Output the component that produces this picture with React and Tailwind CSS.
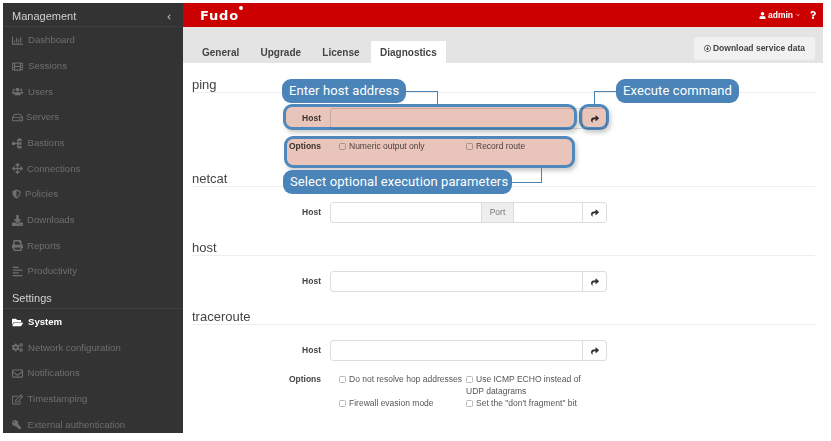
import React from "react";
import {
  FaRegChartBar, FaFilm, FaUsers, FaRegHdd, FaArrowsAlt, FaShieldAlt, FaDownload, FaPrint,
  FaAlignLeft, FaFolderOpen, FaCogs, FaRegEnvelope, FaRegEdit, FaKey, FaUser, FaShare, FaChevronLeft,
  FaChevronDown, FaQuestion, FaRegArrowAltCircleDown,
} from "react-icons/fa";

// dot plus bracket, the bastion mark has no match in the icon sets
function BastionIcon({ className }) {
  return (
    <svg viewBox="0 0 11 11" fill="currentColor" className={className}>
      <rect x="0" y="4" width="3" height="3" />
      <rect x="3" y="5" width="2" height="1" />
      <rect x="5" y="1.5" width="1" height="8" />
      <rect x="6" y="0.5" width="3.5" height="2.6" />
      <rect x="6" y="4.2" width="3.5" height="2.6" />
      <rect x="6" y="7.9" width="3.5" height="2.6" />
    </svg>
  );
}

const management = [
  { label: "Dashboard", icon: FaRegChartBar, box: "w-[16px]" },
  { label: "Sessions", icon: FaFilm, box: "w-[16px]" },
  { label: "Users", icon: FaUsers, box: "w-[16px]" },
  { label: "Servers", icon: FaRegHdd, box: "w-[14px]" },
  { label: "Bastions", icon: BastionIcon, box: "w-[15.5px]" },
  { label: "Connections", icon: FaArrowsAlt, box: "w-[15px]" },
  { label: "Policies", icon: FaShieldAlt, box: "w-[13px]", size: "w-[9px] h-[10px]" },
  { label: "Downloads", icon: FaDownload, box: "w-[15px]" },
  { label: "Reports", icon: FaPrint, box: "w-[15px]" },
  { label: "Productivity", icon: FaAlignLeft, box: "w-[15.5px]" },
];

const settings = [
  { label: "System", icon: FaFolderOpen, box: "w-[16px]", active: true },
  { label: "Network configuration", icon: FaCogs, box: "w-[16px]" },
  { label: "Notifications", icon: FaRegEnvelope, box: "w-[15.5px]" },
  { label: "Timestamping", icon: FaRegEdit, box: "w-[15.5px]" },
  { label: "External authentication", icon: FaKey, box: "w-[15.5px]", size: "w-[9px] h-[9px] -scale-x-100" },
];

function NavItem({ item }) {
  const Icon = item.icon;
  return (
    <div className={`flex items-center h-[25.7px] pl-[9px] text-[9.6px] ${item.active ? "text-white font-bold" : "text-[#6f6f6f]"}`}>
      <span className={`${item.box} shrink-0`}>
        <Icon className={item.size || "w-[11px] h-[11px]"} />
      </span>
      <span>{item.label}</span>
    </div>
  );
}

function Sidebar() {
  return (
    <aside className="w-[180px] shrink-0 bg-[#333333] flex flex-col">
      <div className="flex items-center justify-between h-[24px] pt-[4px] pl-[9px] pr-[11px] border-b border-[#3f3f3f] text-[11px] text-[#d2d2d2] shrink-0">
        <span>Management</span>
        <FaChevronLeft className="w-[6px] h-[6px] text-[#bbbbbb]" />
      </div>
      <div className="pt-[0.5px]">
        {management.map((item) => <NavItem key={item.label} item={item} />)}
      </div>
      <div className="flex items-end h-[25px] pb-[3px] pl-[9px] border-b border-[#3f3f3f] text-[11px] leading-[14px] text-[#d2d2d2] shrink-0">
        Settings
      </div>
      <div>
        {settings.map((item) => <NavItem key={item.label} item={item} />)}
      </div>
    </aside>
  );
}

function TopBar() {
  return (
    <header className="h-[24px] shrink-0 bg-[#cc0000] flex items-center justify-between pl-[17px] pr-[6px] text-white">
      <div className="flex items-start">
        <span className="text-[13px] leading-none tracking-[0.8px] font-bold font-['DejaVu_Sans',sans-serif]">Fudo</span>
        <span className="w-[4px] h-[4px] mt-[-3px] ml-[0.5px] rounded-full bg-white" />
      </div>
      <div className="flex items-center text-[8.5px] font-semibold">
        <FaUser className="w-[7px] h-[7px] mr-[2px]" />
        <span>admin</span>
        <FaChevronDown className="w-[4px] h-[4px] ml-[3px] mr-[9px] text-[#f0b0b0]" />
        <FaQuestion className="w-[8px] h-[8px]" />
      </div>
    </header>
  );
}

function Tabs() {
  const tabs = ["General", "Upgrade", "License", "Diagnostics"];
  return (
    <div className="h-[36px] shrink-0 bg-[#e4e4e4] flex items-end justify-between pl-[9px] pr-[8px]">
      <div className="flex gap-[1.25px] text-[10px] font-bold text-[#444444]">
        {tabs.map((tab) => (
          <div
            key={tab}
            className={`h-[22px] flex items-center ${tab === "Diagnostics" ? "bg-white px-[9.25px]" : "px-[10px]"}`}
          >
            {tab}
          </div>
        ))}
      </div>
      <button className="h-[23px] w-[121px] mb-[3px] rounded-[3px] bg-[#f1f1f1] flex items-center justify-center gap-[2px] text-[8.5px] font-bold text-[#444444]">
        <FaRegArrowAltCircleDown className="w-[7px] h-[7px]" />
        Download service data
      </button>
    </div>
  );
}

function Section({ title, children }) {
  return (
    <section className="mb-[10.5px]">
      <h2 className="h-[22.5px] flex items-end pb-[0.5px] text-[13px] leading-[15px] text-[#444444] border-b border-[#eeeeee]">{title}</h2>
      <div className="pt-[15px]">{children}</div>
    </section>
  );
}

function ExecButton() {
  return (
    <button className="w-[25px] h-[21px] shrink-0 -ml-px border border-[#dddddd] rounded-r-[3px] bg-white flex items-center justify-center">
      <FaShare className="w-[8px] h-[8px] text-[#333333]" />
    </button>
  );
}

function HostRow({ port }) {
  return (
    <div className="flex items-center">
      <label className="w-[129px] text-right text-[8.5px] font-bold text-[#444444]">Host</label>
      <div className="ml-[9px] flex">
        {port ? (
          <div className="w-[253px] h-[21px] flex border border-[#dddddd] rounded-l-[3px]">
            <div className="w-[150px]" />
            <div className="w-[33px] bg-[#eeeeee] border-x border-[#dddddd] flex items-center justify-center text-[8.5px] text-[#777777]">Port</div>
          </div>
        ) : (
          <div className="w-[253px] h-[21px] border border-[#dddddd] rounded-l-[3px]" />
        )}
        <ExecButton />
      </div>
    </div>
  );
}

function Check({ label }) {
  return (
    <div className="text-[8.5px] leading-[12px] text-[#555555]">
      <span className="inline-block w-[7px] h-[7px] mr-[3px] align-[-1px] border border-[#bbbbbb] rounded-[1.5px]" />
      {label}
    </div>
  );
}

function OptionsRow({ className, children }) {
  return (
    <div className={`flex ${className}`}>
      <label className="w-[129px] text-right text-[8.5px] leading-[12px] font-bold text-[#444444]">Options</label>
      <div className="ml-[18px] w-[245px] grid grid-cols-[127px_118px]">{children}</div>
    </div>
  );
}

function Callout({ className, children }) {
  return (
    <div className={`absolute h-[24px] rounded-[9px] bg-[#4a84b8] text-white text-[13px] tracking-[0.1px] leading-[24px] px-[7px] whitespace-nowrap font-['Roboto',sans-serif] ${className}`}>
      {children}
    </div>
  );
}

function Highlight({ className }) {
  return (
    <div className={`absolute border-[3px] border-[#4f88ba] rounded-[9px] bg-[#e8c4ba] mix-blend-multiply shadow-[2px_3px_4px_rgba(0,0,0,0.2)] ${className}`} />
  );
}

export default function App() {
  return (
    <div className="relative w-[831px] h-[441px] bg-white pl-[3px] pt-[3px] overflow-hidden font-['Liberation_Sans',sans-serif]">
      <div className="w-[820px] h-[430px] flex overflow-hidden">
        <Sidebar />
        <main className="flex-1 min-w-0 flex flex-col">
          <TopBar />
          <Tabs />
          <div className="pl-[9px] pr-[8px] pt-[7.75px]">
            <Section title="ping">
              <HostRow />
              <OptionsRow className="mt-[11px] pb-[2px]">
                <Check label="Numeric output only" />
                <Check label="Record route" />
              </OptionsRow>
            </Section>
            <Section title="netcat"><HostRow port /></Section>
            <Section title="host"><HostRow /></Section>
            <Section title="traceroute">
              <HostRow />
              <OptionsRow className="mt-[12px]">
                <Check label="Do not resolve hop addresses" />
                <Check label="Use ICMP ECHO instead of UDP datagrams" />
                <Check label="Firewall evasion mode" />
                <Check label={'Set the "don\'t fragment" bit'} />
              </OptionsRow>
            </Section>
          </div>
        </main>
      </div>

      {/* annotations over the ping form */}
      <Highlight className="left-[283px] top-[104px] w-[294px] h-[26px]" />
      <Highlight className="left-[579px] top-[104px] w-[30px] h-[26px]" />
      <Highlight className="left-[284px] top-[136px] w-[291px] h-[32px]" />

      <div className="absolute left-[406px] top-[91px] w-[32px] h-[13px] border-t border-r border-[#4a82b4]" />
      <div className="absolute left-[594px] top-[91px] w-[22px] h-[13px] border-t border-l border-[#4a82b4]" />
      <div className="absolute left-[512px] top-[168px] w-[30px] h-[15px] border-b border-r border-[#4a82b4]" />

      <Callout className="left-[282px] top-[79px] w-[124px]">Enter host address</Callout>
      <Callout className="left-[616px] top-[79px] w-[123px]">Execute command</Callout>
      <Callout className="left-[283px] top-[170px] w-[229px]">Select optional execution parameters</Callout>
    </div>
  );
}
